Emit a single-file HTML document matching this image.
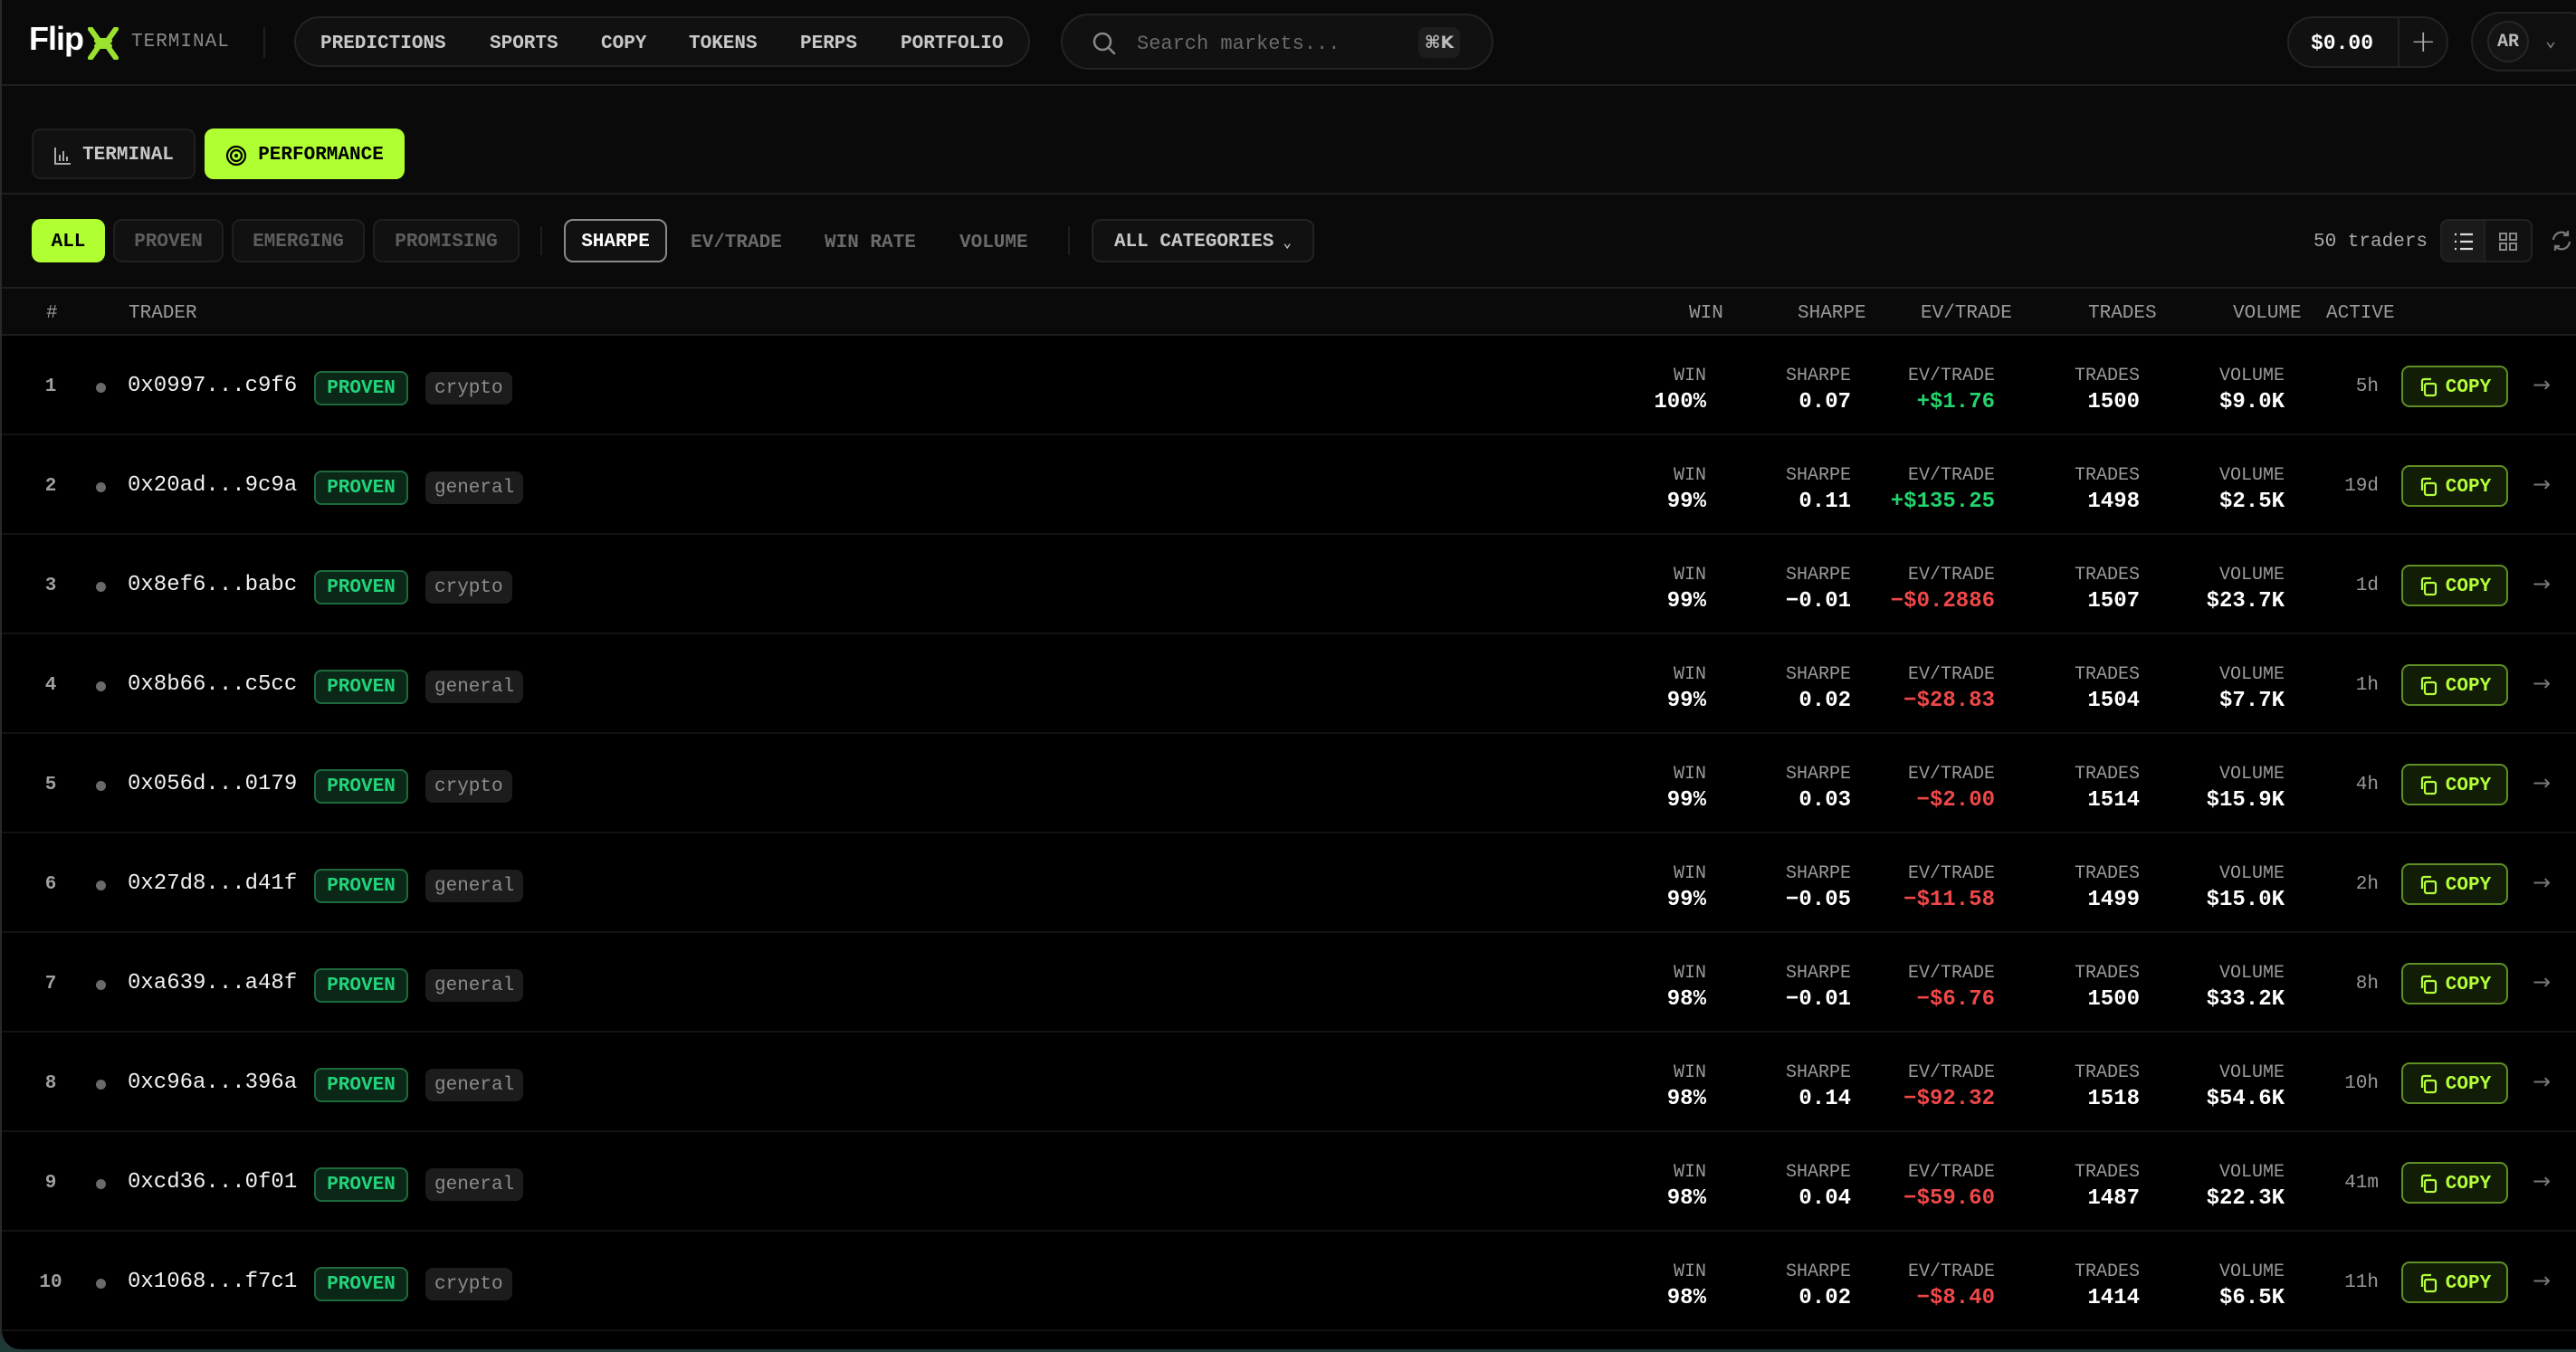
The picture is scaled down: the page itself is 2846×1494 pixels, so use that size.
<!DOCTYPE html>
<html><head><meta charset="utf-8">
<style>
*{box-sizing:border-box;margin:0;padding:0}
html,body{width:2846px;height:1494px;overflow:hidden;background:#1f3a36}
body{font-family:"Liberation Mono",monospace;color:#ddd}
#win{position:absolute;left:0;top:0;width:2846px;height:1491px;background:#000;border-left:2px solid #2a2a2a;border-bottom-left-radius:22px;overflow:hidden}
.abs{position:absolute}
.hdr{position:absolute;left:0;top:0;width:2846px;height:95px;background:#0a0a0a;border-bottom:2px solid #1e1e1e}
.nav{position:absolute;left:323px;top:18px;width:813px;height:56px;border:2px solid #232323;border-radius:28px;background:#111}
.nav span{position:absolute;top:17px;font-size:21px;font-weight:bold;color:#c8c8c8}
.sec{position:absolute;left:0;top:95px;width:2846px;height:120px;background:#0a0a0a;border-bottom:2px solid #1e1e1e}
.flt{position:absolute;left:0;top:215px;width:2846px;height:104px;background:#0a0a0a;border-bottom:2px solid #1e1e1e}
.btn{position:absolute;height:48px;border-radius:10px;font-size:21px;font-weight:bold;display:flex;align-items:center;justify-content:center;padding-top:3px}
.g{background:#111;border:2px solid #1f1f1f;color:#5e5e5e}
.th{position:absolute;left:0;top:319px;width:2846px;height:52px;background:#0a0a0a;border-bottom:2px solid #1c1c1c;font-size:21px;color:#9a9a9a}
.th span{position:absolute;top:16px}
.row{position:absolute;left:0;width:2846px;height:110px;border-bottom:2px solid #121212}
.num{position:absolute;left:36px;width:36px;text-align:center;top:45px;font-size:21px;color:#a0a0a0;font-weight:bold}
.dot{position:absolute;left:104px;top:52px;width:11px;height:11px;border-radius:50%;background:#6a6a6a}
.addr{position:absolute;left:139px;top:42px;font-size:24px;color:#f2f2f2}
.pv{position:absolute;left:345px;top:39px;width:104px;height:38px;border:2px solid #1f6a3d;background:#0b2717;border-radius:8px;color:#22d47a;font-weight:bold;font-size:21px;text-align:center;line-height:36px}
.cat{position:absolute;left:468px;top:40px;height:36px;padding:0 10px;background:#1c1c1c;border-radius:8px;color:#8c8c8c;font-size:21px;line-height:38px}
.m{position:absolute;top:32px;text-align:right}
.m .l{font-size:20px;color:#9a9a9a;line-height:26px}
.m .v{font-size:24px;color:#fff;font-weight:bold;line-height:32px}
.act{position:absolute;right:220px;top:45px;font-size:21px;color:#999}
.cp{position:absolute;left:2651px;top:33px;width:118px;height:46px;border:2px solid #5f8f25;background:#121d07;border-radius:9px;color:#b4ff3a;font-weight:bold;font-size:21px;display:flex;align-items:center;justify-content:center;gap:8px;padding-top:2px}
.arr{position:absolute;left:2796px;top:40px;font-size:24px;color:#777;font-family:"DejaVu Sans",sans-serif}
.pos{color:#23d36c!important}.neg{color:#f04848!important}
</style></head><body>
<div id="win">
<div class="hdr">
  <div class="abs" style="left:30px;top:22px;font-family:'Liberation Sans',sans-serif;font-weight:bold;font-size:36px;color:#fff;letter-spacing:-1px">Flip</div>
  <svg class="abs" style="left:95px;top:30px" width="34" height="36" viewBox="0 0 34 36"><path d="M3 2 L13 16 M31 2 L21 16 M3 34 L13 20 M31 34 L21 20 M10 15 L24 15 M10 21 L24 21" stroke="#9be22f" stroke-width="6" stroke-linecap="round" fill="none"/></svg>
  <div class="abs" style="left:143px;top:35px;font-size:21px;color:#8a8a8a;letter-spacing:1px">TERMINAL</div>
  <div class="abs" style="left:289px;top:30px;width:2px;height:34px;background:#1f1f1f"></div>
  <div class="nav">
    <span style="left:27px">PREDICTIONS</span><span style="left:214px">SPORTS</span><span style="left:337px">COPY</span><span style="left:434px">TOKENS</span><span style="left:557px">PERPS</span><span style="left:668px">PORTFOLIO</span>
  </div>
  <div class="abs" style="left:1170px;top:15px;width:478px;height:62px;border:2px solid #232323;border-radius:31px;background:#111">
    <svg class="abs" style="left:32px;top:17px" width="28" height="28" viewBox="0 0 28 28"><circle cx="12" cy="12" r="9" stroke="#888" stroke-width="2.5" fill="none"/><path d="M19 19 L25 25" stroke="#888" stroke-width="2.5" stroke-linecap="round"/></svg>
    <div class="abs" style="left:82px;top:19px;font-size:22px;color:#6a6a6a">Search markets...</div>
    <div class="abs" style="left:393px;top:13px;width:46px;height:34px;background:#1d1d1d;border-radius:8px;color:#bbb;font-size:19px;font-weight:bold;text-align:center;line-height:34px;font-family:'DejaVu Sans',sans-serif">⌘K</div>
  </div>
  <div class="abs" style="left:2525px;top:18px;width:178px;height:57px;border:2px solid #232323;border-radius:28px;background:#111">
    <div class="abs" style="left:24px;top:15px;font-size:23px;font-weight:bold;color:#fff">$0.00</div>
    <div class="abs" style="left:120px;top:0;width:2px;height:53px;background:#232323"></div>
    <div class="abs" style="left:134px;top:6px;font-size:34px;color:#aaa;font-family:'DejaVu Sans',sans-serif;font-weight:200">+</div>
  </div>
  <div class="abs" style="left:2728px;top:13px;width:140px;height:66px;border:2px solid #232323;border-radius:33px;background:#0f0f0f">
    <div class="abs" style="left:16px;top:8px;width:46px;height:46px;border:2px solid #262626;border-radius:50%;background:#141414;color:#bbb;font-weight:bold;font-size:20px;text-align:center;line-height:44px">AR</div>
    <div class="abs" style="left:80px;top:17px;font-size:20px;color:#888">⌄</div>
  </div>
</div>
<div class="sec">
  <div class="btn g" style="left:33px;top:47px;width:181px;height:56px;color:#c8c8c8;gap:12px">
    <svg width="20" height="22" viewBox="0 0 20 22"><path d="M2 2 V20 H19 M7 17 V10 M11 17 V6 M15 17 V12" stroke="#aaa" stroke-width="2" fill="none"/></svg>TERMINAL</div>
  <div class="btn" style="left:224px;top:47px;width:221px;height:56px;background:#b0ff32;color:#000;gap:12px">
    <svg width="24" height="24" viewBox="0 0 24 24"><circle cx="12" cy="12" r="10" stroke="#000" stroke-width="2.2" fill="none"/><circle cx="12" cy="12" r="6" stroke="#000" stroke-width="2.2" fill="none"/><circle cx="12" cy="12" r="2" fill="#000"/></svg>PERFORMANCE</div>
</div>
<div class="flt">
  <div class="btn" style="left:33px;top:27px;width:81px;background:#b0ff32;color:#000">ALL</div>
  <div class="btn g" style="left:123px;top:27px;width:122px">PROVEN</div>
  <div class="btn g" style="left:254px;top:27px;width:147px">EMERGING</div>
  <div class="btn g" style="left:410px;top:27px;width:162px">PROMISING</div>
  <div class="abs" style="left:595px;top:35px;width:2px;height:32px;background:#1e1e1e"></div>
  <div class="btn" style="left:621px;top:27px;width:114px;border:2px solid #8a8a8a;background:#111;color:#fff">SHARPE</div>
  <div class="abs" style="left:761px;top:42px;font-size:21px;color:#6a6a6a;font-weight:bold">EV/TRADE</div>
  <div class="abs" style="left:909px;top:42px;font-size:21px;color:#6a6a6a;font-weight:bold">WIN RATE</div>
  <div class="abs" style="left:1058px;top:42px;font-size:21px;color:#6a6a6a;font-weight:bold">VOLUME</div>
  <div class="abs" style="left:1178px;top:35px;width:2px;height:32px;background:#1e1e1e"></div>
  <div class="btn" style="left:1204px;top:27px;width:246px;border:2px solid #232323;background:#111;color:#c8c8c8;gap:10px">ALL CATEGORIES <span style="font-size:16px">⌄</span></div>
  <div class="abs" style="left:2554px;top:41px;font-size:21px;color:#aaa">50 traders</div>
  <div class="abs" style="left:2694px;top:27px;width:50px;height:48px;background:#1a1a1a;border:2px solid #222;border-radius:9px 0 0 9px">
    <svg style="margin:12px 0 0 12px" width="24" height="22" viewBox="0 0 24 22"><path d="M2 3h2M8 3h14M2 11h2M8 11h14M2 19h2M8 19h14" stroke="#ddd" stroke-width="2.2"/></svg></div>
  <div class="abs" style="left:2744px;top:27px;width:52px;height:48px;background:#111;border:2px solid #222;border-left:none;border-radius:0 9px 9px 0">
    <svg style="margin:12px 0 0 14px" width="22" height="22" viewBox="0 0 22 22"><rect x="2" y="2" width="7" height="7" stroke="#888" stroke-width="2" fill="none"/><rect x="13" y="2" width="7" height="7" stroke="#888" stroke-width="2" fill="none"/><rect x="2" y="13" width="7" height="7" stroke="#888" stroke-width="2" fill="none"/><rect x="13" y="13" width="7" height="7" stroke="#888" stroke-width="2" fill="none"/></svg></div>
  <svg class="abs" style="left:2815px;top:38px" width="26" height="26" viewBox="0 0 26 26"><path d="M4 12 A9 9 0 0 1 20 7 M22 14 A9 9 0 0 1 6 19 M20 2 V7 H15 M6 24 V19 H11" stroke="#777" stroke-width="2.2" fill="none"/></svg>
</div>
<div class="th">
  <span style="left:49px">#</span><span style="left:140px">TRADER</span>
  <span style="left:1864px">WIN</span><span style="left:1984px">SHARPE</span><span style="left:2120px">EV/TRADE</span><span style="left:2305px">TRADES</span><span style="left:2465px">VOLUME</span><span style="left:2568px">ACTIVE</span>
</div>
<div id="rows"></div>
</div>
<script>
var d=[
["1","0x0997...c9f6","crypto","100%","0.07","+$1.76","1500","$9.0K","5h"],
["2","0x20ad...9c9a","general","99%","0.11","+$135.25","1498","$2.5K","19d"],
["3","0x8ef6...babc","crypto","99%","-0.01","-$0.2886","1507","$23.7K","1d"],
["4","0x8b66...c5cc","general","99%","0.02","-$28.83","1504","$7.7K","1h"],
["5","0x056d...0179","crypto","99%","0.03","-$2.00","1514","$15.9K","4h"],
["6","0x27d8...d41f","general","99%","-0.05","-$11.58","1499","$15.0K","2h"],
["7","0xa639...a48f","general","98%","-0.01","-$6.76","1500","$33.2K","8h"],
["8","0xc96a...396a","general","98%","0.14","-$92.32","1518","$54.6K","10h"],
["9","0xcd36...0f01","general","98%","0.04","-$59.60","1487","$22.3K","41m"],
["10","0x1068...f7c1","crypto","98%","0.02","-$8.40","1414","$6.5K","11h"]];
var h="";
function m(r,l,v,c){return '<div class="m" style="right:'+(2846-r)+'px"><div class="l">'+l+'</div><div class="v '+(c||'')+'">'+v+'</div></div>';}
d.forEach(function(x,i){
var ev=x[5].charAt(0)=='+'?'pos':'neg';
h+='<div class="row" style="top:'+(371+i*110)+'px"><div class="num">'+x[0]+'</div><div class="dot"></div><div class="addr">'+x[1]+'</div><div class="pv">PROVEN</div><div class="cat">'+x[2]+'</div>'+
m(1883,'WIN',x[3])+m(2043,'SHARPE',x[4].replace('-','\u2212'))+m(2202,'EV/TRADE',x[5].replace('-','\u2212'),ev)+m(2362,'TRADES',x[6])+m(2522,'VOLUME',x[7])+
'<div class="act">'+x[8]+'</div><div class="cp"><svg width="22" height="24" viewBox="0 0 22 24"><rect x="7" y="8" width="12" height="13" rx="2" stroke="#b4ff3a" stroke-width="2.2" fill="none"/><path d="M4 16 V5 a2 2 0 0 1 2-2 H14" stroke="#b4ff3a" stroke-width="2.2" fill="none"/></svg>COPY</div><div class="arr">→</div></div>';});
document.getElementById('rows').innerHTML=h;
</script>
</body></html>
